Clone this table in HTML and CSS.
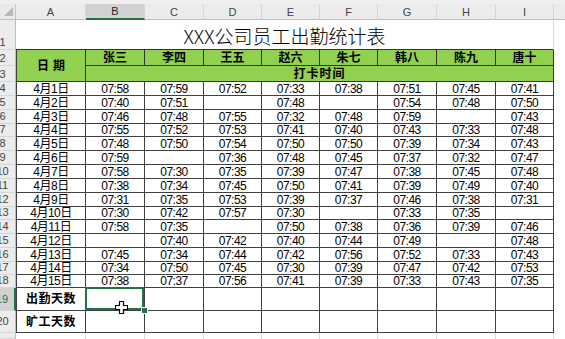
FILE: index.html
```html
<!DOCTYPE html>
<html lang="zh-CN">
<head>
<meta charset="utf-8">
<title>XXX公司员工出勤统计表</title>
<link rel="stylesheet" href="styles.css">
</head>
<body>
<div class="strip"></div>
<div class="grid">
  <div class="corner"><svg class="tri" width="16" height="16" viewBox="0 0 16 16"><polygon points="13,3 13,12 4,12" fill="#b9b9b9"/></svg></div>
  <div class="ch">A</div><div class="ch sel">B</div><div class="ch">C</div><div class="ch">D</div><div class="ch">E</div><div class="ch">F</div><div class="ch">G</div><div class="ch">H</div><div class="ch">I</div><div class="ch last"></div>

  <div class="rh"><span>1</span></div><div class="title">XXX公司员工出勤统计表</div><div class="j"></div>

  <div class="rh"><span>2</span></div><div class="hd a hdate">日期</div>
  <div class="hd">张三</div><div class="hd">李四</div><div class="hd">王五</div><div class="hd">赵六</div><div class="hd">朱七</div><div class="hd">韩八</div><div class="hd">陈九</div><div class="hd">唐十</div><div class="j"></div>

  <div class="rh"><span>3</span></div><div class="hd hclock">打卡时间</div><div class="j"></div>

  <div class="rh"><span>4</span></div><div class="d a">4月1日</div><div class="d">07:58</div><div class="d">07:59</div><div class="d">07:52</div><div class="d">07:33</div><div class="d">07:38</div><div class="d">07:51</div><div class="d">07:45</div><div class="d">07:41</div><div class="j"></div>
  <div class="rh"><span>5</span></div><div class="d a">4月2日</div><div class="d">07:40</div><div class="d">07:51</div><div class="d"></div><div class="d">07:48</div><div class="d"></div><div class="d">07:54</div><div class="d">07:48</div><div class="d">07:50</div><div class="j"></div>
  <div class="rh"><span>6</span></div><div class="d a">4月3日</div><div class="d">07:46</div><div class="d">07:48</div><div class="d">07:55</div><div class="d">07:32</div><div class="d">07:48</div><div class="d">07:59</div><div class="d"></div><div class="d">07:43</div><div class="j"></div>
  <div class="rh"><span>7</span></div><div class="d a">4月4日</div><div class="d">07:55</div><div class="d">07:52</div><div class="d">07:53</div><div class="d">07:41</div><div class="d">07:40</div><div class="d">07:43</div><div class="d">07:33</div><div class="d">07:48</div><div class="j"></div>
  <div class="rh"><span>8</span></div><div class="d a">4月5日</div><div class="d">07:48</div><div class="d">07:50</div><div class="d">07:54</div><div class="d">07:50</div><div class="d">07:50</div><div class="d">07:39</div><div class="d">07:34</div><div class="d">07:43</div><div class="j"></div>
  <div class="rh"><span>9</span></div><div class="d a">4月6日</div><div class="d">07:59</div><div class="d"></div><div class="d">07:36</div><div class="d">07:48</div><div class="d">07:45</div><div class="d">07:37</div><div class="d">07:32</div><div class="d">07:47</div><div class="j"></div>
  <div class="rh"><span>10</span></div><div class="d a">4月7日</div><div class="d">07:58</div><div class="d">07:30</div><div class="d">07:35</div><div class="d">07:39</div><div class="d">07:47</div><div class="d">07:38</div><div class="d">07:45</div><div class="d">07:48</div><div class="j"></div>
  <div class="rh"><span>11</span></div><div class="d a">4月8日</div><div class="d">07:38</div><div class="d">07:34</div><div class="d">07:45</div><div class="d">07:50</div><div class="d">07:41</div><div class="d">07:39</div><div class="d">07:49</div><div class="d">07:40</div><div class="j"></div>
  <div class="rh"><span>12</span></div><div class="d a">4月9日</div><div class="d">07:31</div><div class="d">07:35</div><div class="d">07:53</div><div class="d">07:39</div><div class="d">07:37</div><div class="d">07:46</div><div class="d">07:38</div><div class="d">07:31</div><div class="j"></div>
  <div class="rh"><span>13</span></div><div class="d a">4月10日</div><div class="d">07:30</div><div class="d">07:42</div><div class="d">07:57</div><div class="d">07:30</div><div class="d"></div><div class="d">07:33</div><div class="d">07:35</div><div class="d"></div><div class="j"></div>
  <div class="rh"><span>14</span></div><div class="d a">4月11日</div><div class="d">07:58</div><div class="d">07:35</div><div class="d"></div><div class="d">07:50</div><div class="d">07:38</div><div class="d">07:36</div><div class="d">07:39</div><div class="d">07:46</div><div class="j"></div>
  <div class="rh"><span>15</span></div><div class="d a">4月12日</div><div class="d"></div><div class="d">07:40</div><div class="d">07:42</div><div class="d">07:40</div><div class="d">07:44</div><div class="d">07:49</div><div class="d"></div><div class="d">07:48</div><div class="j"></div>
  <div class="rh"><span>16</span></div><div class="d a">4月13日</div><div class="d">07:45</div><div class="d">07:34</div><div class="d">07:44</div><div class="d">07:42</div><div class="d">07:56</div><div class="d">07:52</div><div class="d">07:33</div><div class="d">07:43</div><div class="j"></div>
  <div class="rh"><span>17</span></div><div class="d a">4月14日</div><div class="d">07:34</div><div class="d">07:50</div><div class="d">07:45</div><div class="d">07:30</div><div class="d">07:39</div><div class="d">07:47</div><div class="d">07:42</div><div class="d">07:53</div><div class="j"></div>
  <div class="rh"><span>18</span></div><div class="d a">4月15日</div><div class="d">07:38</div><div class="d">07:37</div><div class="d">07:56</div><div class="d">07:41</div><div class="d">07:39</div><div class="d">07:33</div><div class="d">07:43</div><div class="d">07:35</div><div class="j"></div>

  <div class="rh tall sel"><span>19</span></div><div class="d a lbl">出勤天数</div>
  <div class="d active"><span class="selbox"></span><span class="handle"></span><svg class="cursor" width="13" height="13" viewBox="0 0 13 13"><path d="M4.5 0.5H8.5V4.5H12.5V8.5H8.5V12.5H4.5V8.5H0.5V4.5H4.5Z" fill="#fff" stroke="#000" stroke-width="1.2"/></svg></div>
  <div class="d"></div><div class="d"></div><div class="d"></div><div class="d"></div><div class="d"></div><div class="d"></div><div class="d"></div><div class="j"></div>

  <div class="rh tall"><span>20</span></div><div class="d a lbl">旷工天数</div>
  <div class="d"></div><div class="d"></div><div class="d"></div><div class="d"></div><div class="d"></div><div class="d"></div><div class="d"></div><div class="d"></div><div class="j"></div>

  <div class="rh"></div><div class="g"></div><div class="g"></div><div class="g"></div><div class="g"></div><div class="g"></div><div class="g"></div><div class="g"></div><div class="g"></div><div class="g"></div><div class="j"></div>
</div>
</body>
</html>
```
FILE: styles.css
```css
html, body {
  margin: 0;
  padding: 0;
}
body {
  width: 565px;
  height: 339px;
  overflow: hidden;
  background: #fff;
  font-family: "Liberation Sans", "Noto Sans CJK SC", sans-serif;
  color: #000;
}
.strip {
  height: 4px;
  background: #efefef;
}
.grid {
  display: grid;
  grid-template-columns: 16px 70px 59px 59px 58px 58px 58px 59px 59px 58px 1fr;
  grid-template-rows: 16px 30px 16px 16px 14px 14px 14px 13px 14px 14px 14px 14px 14px 13px 14px 14px 14px 13px 13px 23px 22px 1fr;
  height: 335px;
}
.grid > div {
  box-sizing: border-box;
  display: flex;
  justify-content: center;
  overflow: hidden;
  white-space: nowrap;
  min-width: 0;
}
.corner {
  background: #e9e9e9;
  border-right: 1px solid #c6c6c6;
  border-bottom: 1px solid #bdbdbd;
}
.tri {
  display: block;
  flex: none;
}
.ch {
  background: #ececec;
  border-right: 1px solid #d6d6d6;
  border-bottom: 1px solid #bdbdbd;
  color: #444;
  font-size: 11px;
  align-items: center;
}
.ch.sel {
  background: #d2d2d2;
  border-bottom: 2px solid #217346;
  color: #262626;
}
.ch.last {
  border-right: none;
}
.rh {
  background: #ececec;
  border-right: 1px solid #bdbdbd;
  border-bottom: 1px solid #d6d6d6;
  color: #444;
  font-size: 11px;
  line-height: 11px;
  align-items: flex-end;
  padding-right: 10px;
  padding-bottom: 1px;
}
.rh.tall {
  padding-bottom: 5px;
}
.rh.sel {
  background: #d2d2d2;
  border-right: 2px solid #217346;
  color: #217346;
}
.title {
  grid-column: 2 / span 9;
  border-right: 1px solid #d9d9d9;
  border-bottom: 1px solid #333;
  font-family: "Noto Sans CJK SC", sans-serif;
  font-size: 19px;
  font-weight: 300;
  align-items: center;
  line-height: 1;
  padding-top: 2px;
}
.hd {
  background: #92d050;
  border-right: 1px solid #333;
  border-bottom: 1px solid #333;
  font-weight: bold;
  font-size: 12px;
  line-height: 1;
  align-items: center;
}
.hdate {
  grid-column: 2;
  grid-row: span 2;
  letter-spacing: 4px;
  padding-left: 4px;
}
.hclock {
  grid-column: 3 / span 8;
  letter-spacing: 1px;
}
.d {
  border-right: 1px solid #404040;
  border-bottom: 1px solid #404040;
  font-size: 12px;
  letter-spacing: -0.5px;
  line-height: 12px;
  align-items: flex-end;
}
.a {
  border-left: 1px solid #404040;
}
.lbl {
  align-items: center;
  font-weight: bold;
  letter-spacing: 0.5px;
}
.active {
  position: relative;
  overflow: visible !important;
  z-index: 2;
}
.selbox {
  position: absolute;
  top: -1px;
  left: -1px;
  right: 0;
  bottom: 0;
  border: 2px solid #217346;
}
.handle {
  position: absolute;
  right: -3px;
  bottom: -3px;
  width: 5px;
  height: 5px;
  background: #217346;
  box-shadow: 0 0 0 1px #fff;
}
.cursor {
  position: absolute;
  left: 29px;
  top: 13px;
}
.g {
  border-right: 1px solid #dadada;
}
.j {
  background: #fff;
}
```
